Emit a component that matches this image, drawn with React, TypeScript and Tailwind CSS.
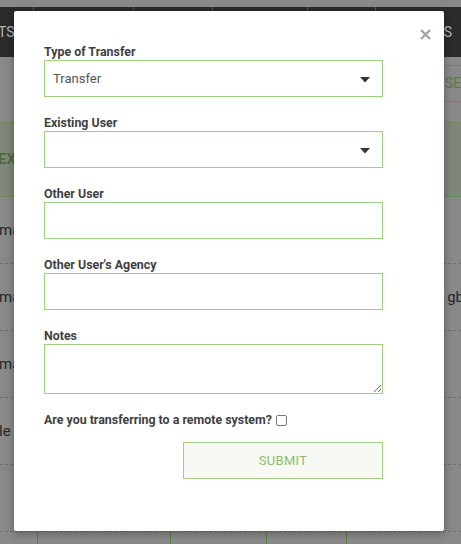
import { useState } from "react";

const labelCls = "block text-[12.4px] leading-[16px] font-bold text-[#3f3f3f]";
const boxCls = "w-[339px] h-[37px] border border-[#9fd07f] bg-white";

const Caret = () => (
  <svg width="10" height="6" viewBox="0 0 10 6" className="absolute right-[12px] top-[16px]">
    <path d="M0 0 L10 0 L5 5.5 Z" fill="#333" />
  </svg>
);

// background page (dimmed by the modal backdrop)
const BackPage = () => (
  <div className="w-[461px] h-[544px] bg-[#898989] overflow-hidden font-['Roboto',sans-serif]">
    <div className="h-[7px]" />
    <div className="relative h-[50px] bg-[#2b2b2b] flex items-center justify-between text-[14px] text-[#b5b5b5]">
      <span className="-ml-[2px]">TS</span>
      <span className="mr-[9px]">S</span>
      {[33, 133, 212, 307, 375].map((x) => (
        <div key={x} className="absolute top-0 w-px h-[4px] bg-[#555]" style={{ left: x }} />
      ))}
    </div>
    <div className="h-[65px] flex justify-end items-start pt-[8px]">
      <div className="w-[18px] h-[37px] border-y border-l border-[#6a8c4f] flex items-center text-[14px] text-[#5b7a44]">
        <span className="-ml-[3px]">.SE</span>
      </div>
    </div>
    <div className="h-[75px] bg-[#7e877a] border-y border-[#6a8c4f] flex items-center text-[15px] font-bold text-[#4f6b3a]">
      <span className="-ml-[2px]">EX</span>
    </div>
    {[
      { l: "ma", r: "" },
      { l: "ma", r: "gb" },
      { l: "ma", r: "" },
      { l: "le", r: "" },
      { l: "", r: "" },
    ].map((row, i) => (
      <div
        key={i}
        className="h-[67px] border-b border-dashed border-[#6f6f6f] flex items-center justify-between text-[15px] text-[#262626]"
      >
        <span className="-ml-[1px]">{row.l}</span>
        <span className="-mr-[3px]">{row.r}</span>
      </div>
    ))}
    <div className="relative h-[20px]">
      {[37, 170, 266, 346].map((x) => (
        <div key={x} className="absolute top-0 w-px h-full bg-[#5e7d45]" style={{ left: x }} />
      ))}
    </div>
  </div>
);

export default function App() {
  const [remote, setRemote] = useState(false);

  return (
    <div className="relative w-[461px] h-[544px] overflow-hidden">
      <BackPage />

      {/* Modal */}
      <div className="absolute left-[14px] top-[11px] w-[430px] h-[520px] bg-white rounded-[2px] shadow-[0_2px_8px_rgba(0,0,0,0.35)] font-['Roboto',sans-serif]">
        <button className="absolute left-[406px] top-[18px] w-[11px] h-[11px]">
          <svg width="11" height="11" viewBox="0 0 11 11">
            <path d="M1 1 L10 10 M10 1 L1 10" stroke="#a3a3a3" strokeWidth="2.4" />
          </svg>
        </button>

        <div className="pt-[33px] pl-[30px]">
          <label className={labelCls}>Type of Transfer</label>
          <div className={`${boxCls} relative flex items-center pl-[8px] text-[13px] text-[#555] mb-[18px]`}>
            Transfer
            <Caret />
          </div>

          <label className={labelCls}>Existing User</label>
          <div className={`${boxCls} relative mb-[18px]`}>
            <Caret />
          </div>

          <label className={labelCls}>Other User</label>
          <input type="text" className={`${boxCls} block outline-none mb-[18px]`} />

          <label className={labelCls}>Other User's Agency</label>
          <input type="text" className={`${boxCls} block outline-none mb-[18px]`} />

          <label className={labelCls}>Notes</label>
          <textarea className="block w-[339px] h-[50px] border border-[#9fd07f] outline-none mb-[18px]" />

          <div className="flex items-center h-[16px] mb-[14px]">
            <span className="text-[12.4px] leading-[16px] font-bold text-[#3f3f3f]">
              Are you transferring to a remote system?
            </span>
            <input
              type="checkbox"
              checked={remote}
              onChange={(e) => setRemote(e.target.checked)}
              className="ml-[4px] w-[11px] h-[11px] appearance-none border border-[#777] rounded-[2px] bg-white"
            />
          </div>

          <div className="w-[339px] flex justify-end">
            <button className="w-[200px] h-[37px] border border-[#9fd07f] bg-[#f7f9f4] text-[13px] text-[#8cbd6b] tracking-[0.3px]">
              SUBMIT
            </button>
          </div>
        </div>
      </div>
    </div>
  );
}
